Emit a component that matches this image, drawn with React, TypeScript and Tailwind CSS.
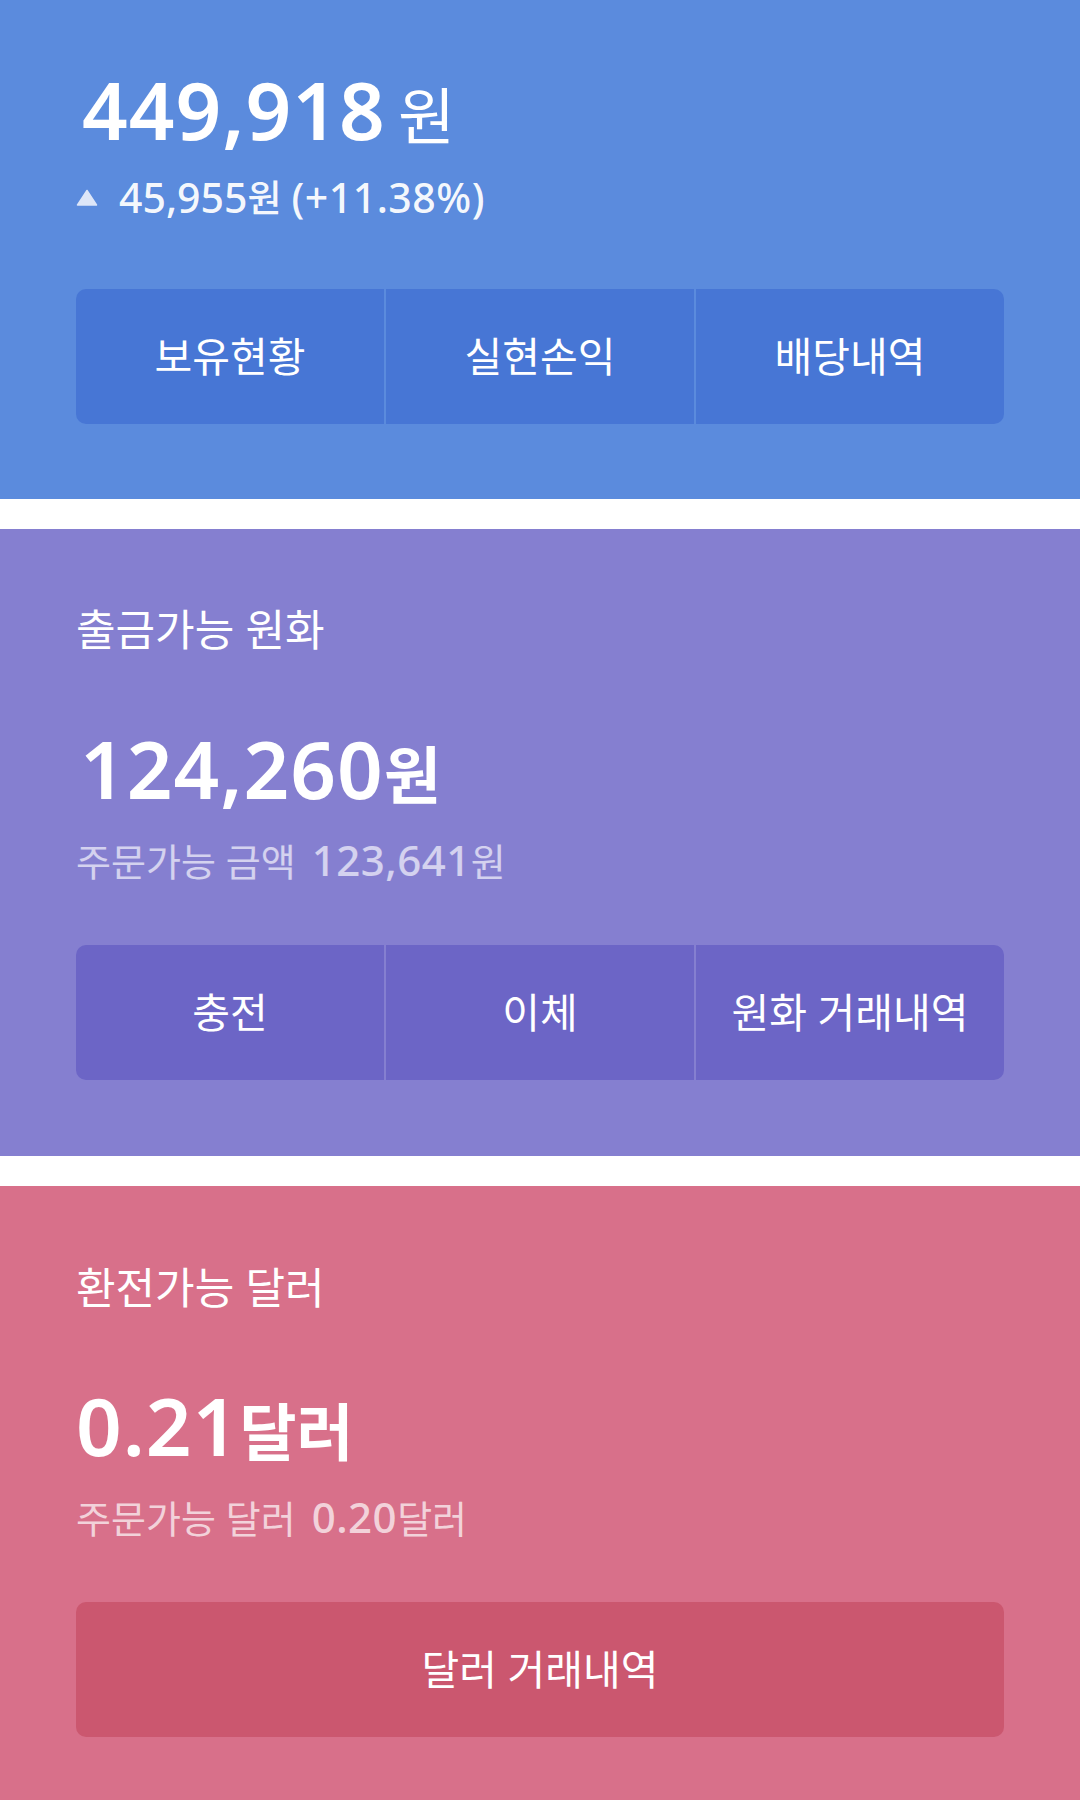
import React from 'react';

const font = "font-['Noto_Sans','Noto_Sans_CJK_KR',sans-serif]";

type Action = { label: string };

function ActionBar({ actions, tone }: { actions: Action[]; tone: string }) {
    return (
        <div className="flex h-[135px] gap-[2px] overflow-hidden rounded-[10px]">
            {actions.map(a => (
                <button
                    key={a.label}
                    type="button"
                    className={`flex-1 flex items-center justify-center text-[41px] leading-none text-white ${tone}`}
                >
                    {a.label}
                </button>
            ))}
        </div>
    );
}

function TriangleUp() {
    return (
        <svg width="22" height="17" viewBox="0 0 22 17" className="shrink-0">
            <path d="M11 1.5 L20.5 16 L1.5 16 Z" fill="#dde6f8" stroke="#dde6f8" strokeWidth="1.5" strokeLinejoin="round" />
        </svg>
    );
}

export default function App() {
    return (
        <div className={`w-[1080px] bg-white ${font}`}>
            {/* Total assets */}
            <section className="h-[499px] bg-[#5b8bdd] px-[76px] pt-[69px]">
                <div className="flex items-baseline h-[80px] leading-none text-white pl-[6px]">
                    <span className="text-[80px] font-semibold tracking-[1px]">449,918</span>
                    <span className="ml-[12px] text-[62px] font-normal">원</span>
                </div>
                <div className="mt-[28px] flex items-center h-[40px] leading-none text-white/95">
                    <TriangleUp />
                    <span className="ml-[21px] text-[41px] font-medium">45,955</span>
                    <span className="text-[37px] font-medium">원</span>
                    <span className="ml-[10px] text-[41px] font-medium tracking-[0.5px]">(+11.38%)</span>
                </div>
                <div className="mt-[72px]">
                    <ActionBar
                        tone="bg-[#4776d5]"
                        actions={[{ label: '보유현황' }, { label: '실현손익' }, { label: '배당내역' }]}
                    />
                </div>
            </section>

            <div className="h-[30px]" />

            {/* KRW */}
            <section className="h-[627px] bg-[#857fd0] px-[76px] pt-[79px]">
                <div className="h-[42px] text-[43px] leading-none text-white">출금가능 원화</div>
                <div className="mt-[78px] flex items-baseline h-[80px] leading-none text-white pl-[4px]">
                    <span className="text-[80px] font-semibold tracking-[1px]">124,260</span>
                    <span className="text-[62px] font-bold">원</span>
                </div>
                <div className="mt-[31px] flex items-baseline h-[40px] leading-none text-white/65">
                    <span className="text-[38px]">주문가능 금액</span>
                    <span className="ml-[16px] text-[42px] font-medium tracking-[0.5px]">123,641</span>
                    <span className="text-[38px]">원</span>
                </div>
                <div className="mt-[66px]">
                    <ActionBar
                        tone="bg-[#6c65c6]"
                        actions={[{ label: '충전' }, { label: '이체' }, { label: '원화 거래내역' }]}
                    />
                </div>
            </section>

            <div className="h-[30px]" />

            {/* USD */}
            <section className="h-[614px] bg-[#d8708a] px-[76px] pt-[80px]">
                <div className="h-[42px] text-[43px] leading-none text-white">환전가능 달러</div>
                <div className="mt-[77px] flex items-baseline h-[80px] leading-none text-white">
                    <span className="text-[80px] font-semibold tracking-[1px]">0.21</span>
                    <span className="text-[62px] font-bold">달러</span>
                </div>
                <div className="mt-[31px] flex items-baseline h-[40px] leading-none text-white/70">
                    <span className="text-[38px]">주문가능 달러</span>
                    <span className="ml-[16px] text-[42px] font-medium tracking-[0.5px]">0.20</span>
                    <span className="text-[38px]">달러</span>
                </div>
                <div className="mt-[66px]">
                    <button
                        type="button"
                        className="w-full h-[135px] rounded-[10px] bg-[#cb576f] text-[41px] leading-none text-white"
                    >
                        달러 거래내역
                    </button>
                </div>
            </section>
        </div>
    );
}
